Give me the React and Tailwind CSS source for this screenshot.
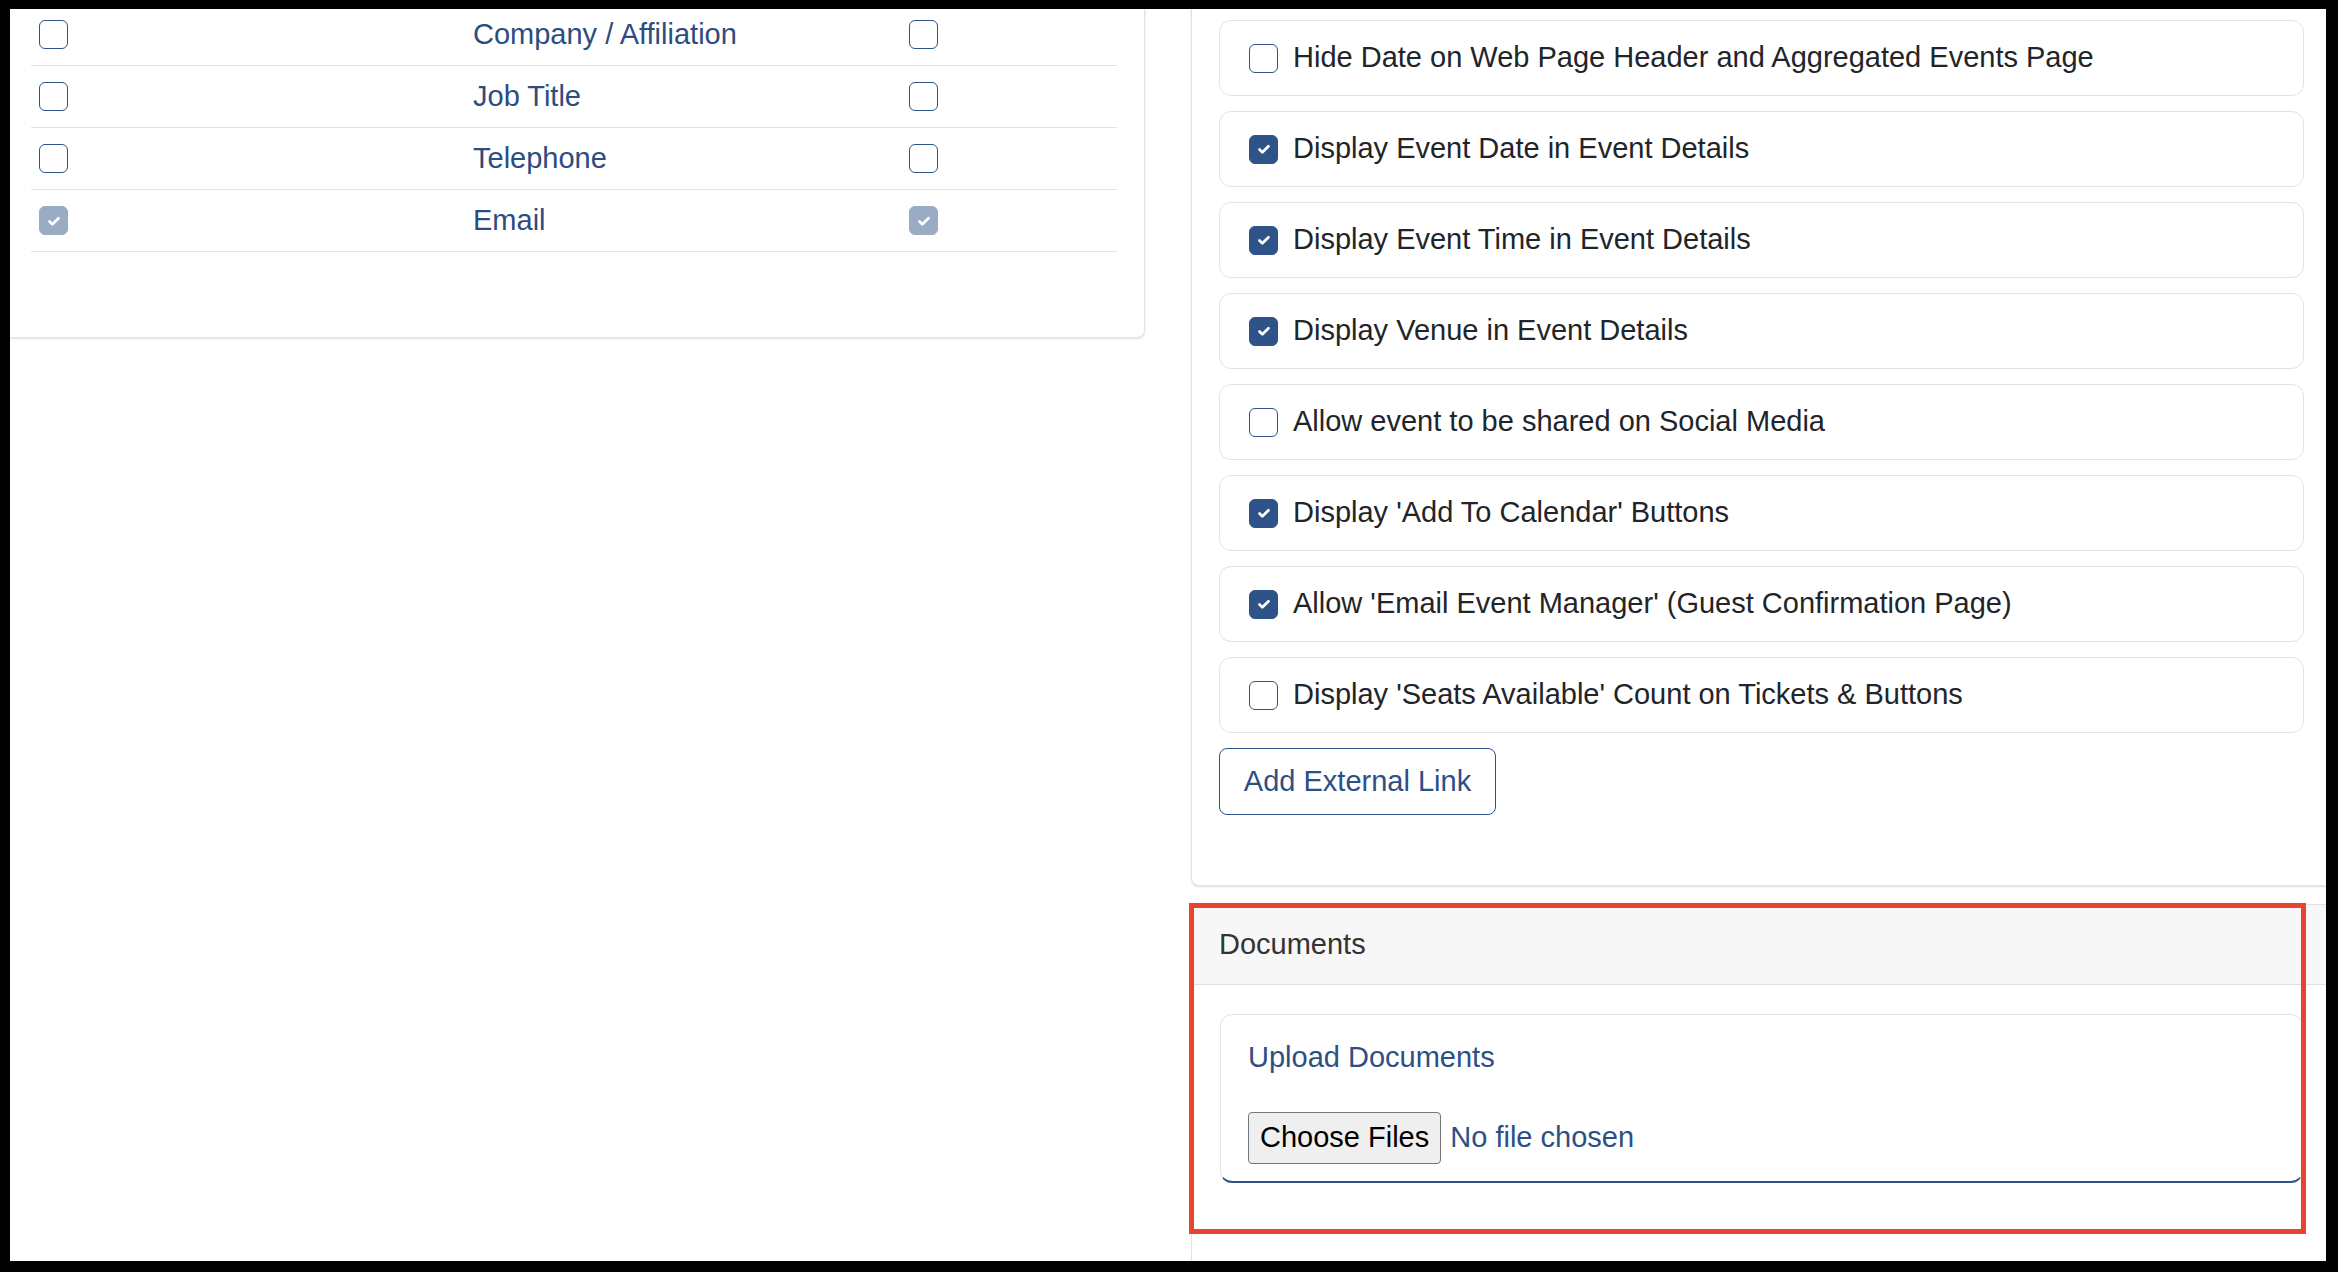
import clsx from 'clsx';

const fields = [
  { label: 'Company / Affiliation', checked: false },
  { label: 'Job Title', checked: false },
  { label: 'Telephone', checked: false },
  { label: 'Email', checked: true },
];

const options = [
  { label: 'Hide Date on Web Page Header and Aggregated Events Page', checked: false },
  { label: 'Display Event Date in Event Details', checked: true },
  { label: 'Display Event Time in Event Details', checked: true },
  { label: 'Display Venue in Event Details', checked: true },
  { label: 'Allow event to be shared on Social Media', checked: false },
  { label: "Display 'Add To Calendar' Buttons", checked: true },
  { label: "Allow 'Email Event Manager' (Guest Confirmation Page)", checked: true },
  { label: "Display 'Seats Available' Count on Tickets & Buttons", checked: false },
];

const Box = ({ checked, muted }) => (
  <span
    className={clsx(
      'flex h-[29px] w-[29px] shrink-0 items-center justify-center rounded-[6px] border-[1.5px]',
      checked
        ? muted
          ? 'border-[#9aabc4] bg-[#9aabc4]'
          : 'border-[#2f5289] bg-[#2f5289]'
        : 'border-[#2f5289] bg-white'
    )}
  >
    {checked && (
      <svg viewBox="0 0 20 20" className="h-[18px] w-[18px]">
        <path
          d="M5 10.5l3.2 3.2L15 7"
          fill="none"
          stroke="white"
          strokeWidth="3"
          strokeLinecap="round"
          strokeLinejoin="round"
        />
      </svg>
    )}
  </span>
);

const App = () => {
  return (
    <div className="h-[1272px] w-[2338px] bg-black pb-[11px] pl-[10px] pr-[12px] pt-[9px] font-['Liberation_Sans',Arial,sans-serif] text-[29px]">
      <div className="relative h-full w-full overflow-hidden bg-white">
        <div className="flex items-start">
          {/* Registration fields table */}
          <div className="-ml-[20px] -mt-[20px] w-[1155px] shrink-0 rounded-br-lg border border-[#e4e4e7] bg-white pb-[85px] pl-[40px] pr-[27px] pt-[14px] shadow-sm">
            {fields.map((f) => (
              <div
                key={f.label}
                className="grid h-[62px] grid-cols-[442px_436px_1fr] items-center border-b border-[#e2e3ea]"
              >
                <div className="pl-[8px]">
                  <Box checked={f.checked} muted />
                </div>
                <div className="text-[#2d4c80]">{f.label}</div>
                <div>
                  <Box checked={f.checked} muted />
                </div>
              </div>
            ))}
          </div>

          <div className="-mt-[20px] ml-[46px] flex w-[1149px] shrink-0 flex-col gap-[18px]">
            {/* Display options */}
            <div className="rounded-b-lg border border-[#e2e2e2] bg-white pb-[70px] pl-[27px] pr-[35px] pt-[30px] shadow-sm">
              <div className="flex flex-col gap-[15px]">
                {options.map((o) => (
                  <div
                    key={o.label}
                    className="flex h-[76px] items-center gap-[15px] rounded-xl border-[1.5px] border-[#e1e3e6] pl-[29px] text-[#212529]"
                  >
                    <Box checked={o.checked} />
                    <span>{o.label}</span>
                  </div>
                ))}
                <button className="h-[67px] w-[277px] rounded-lg border-[1.5px] border-[#2f5289] bg-white text-[29px] text-[#2c4f86]">
                  Add External Link
                </button>
              </div>
            </div>

            {/* Documents */}
            <div className="border border-[#e2e2e2] bg-white">
              <div className="flex h-[80px] items-center border-b-[1.5px] border-[#dfdfdf] bg-[#f7f7f7] pl-[27px] text-[#333333]">
                Documents
              </div>
              <div className="pb-[100px] pl-[28px] pr-[36px] pt-[29px]">
                <div className="flex h-[169px] flex-col rounded-xl border-[1.5px] border-b-2 border-[#e4e4e4] border-b-[#2f5289] pl-[27px] pt-[21px]">
                  <div className="text-[#2c4f86]">Upload Documents</div>
                  <div className="mt-[32px] flex items-center gap-[9px]">
                    <span className="flex h-[52px] items-center rounded-[4px] border-[1.5px] border-[#767676] bg-[#efefef] px-[11px] text-black">
                      Choose Files
                    </span>
                    <span className="text-[#2c4f86]">No file chosen</span>
                  </div>
                </div>
              </div>
            </div>
          </div>
        </div>

        {/* annotation highlight */}
        <div className="pointer-events-none absolute left-[1179px] top-[894px] z-10 h-[331px] w-[1117px] border-[5px] border-[#e8432c]" />
      </div>
    </div>
  );
};

export default App;
